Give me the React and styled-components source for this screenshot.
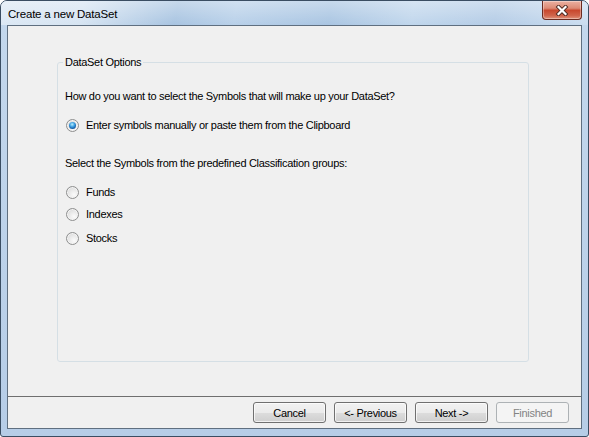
import React from 'react';
import styled, { createGlobalStyle } from 'styled-components';

const GlobalStyle = createGlobalStyle`
  html, body {
    margin: 0;
    padding: 0;
    background: #ffffff;
  }
  body {
    font-family: 'Liberation Sans', Arial, sans-serif;
    font-size: 11px;
    color: #000;
  }
`;

const Window = styled.div`
  box-sizing: border-box;
  width: 589px;
  height: 437px;
  display: flex;
  flex-direction: column;
  border: 1px solid #3a4d62;
  border-radius: 7px 7px 3px 3px;
  background: linear-gradient(180deg, #c4d8ed 0%, #b6cde7 100%);
  overflow: hidden;
`;

const TitleBar = styled.div`
  flex: none;
  height: 24px;
  display: flex;
  align-items: flex-start;
  justify-content: space-between;
  padding: 0 6px 0 7px;
  background:
    linear-gradient(180deg, rgba(255, 255, 255, 0.35) 0%, rgba(255, 255, 255, 0) 100%),
    linear-gradient(100deg, #dce8f4 0%, #d6e4f2 14%, #a8c4e1 30%, #b8d0e9 40%, #a9c5e2 56%, #c0d6ec 70%, #b4cce6 84%, #cbddf0 100%);
`;

const Title = styled.span`
  font-family: 'Liberation Sans', Arial, sans-serif;
  font-size: 11.5px;
  letter-spacing: -0.2px;
  line-height: 14px;
  margin-top: 6px;
  color: #000;
`;

const CloseButton = styled.div`
  box-sizing: border-box;
  width: 40px;
  height: 19px;
  display: flex;
  align-items: center;
  justify-content: center;
  border: 1px solid #6b2b20;
  border-top: none;
  border-radius: 0 0 4px 4px;
  background: linear-gradient(180deg, #ebb1a2 0%, #dc8a75 40%, #c8482e 52%, #d0634a 80%, #e0927a 100%);
  box-shadow: inset 0 0 0 1px rgba(255, 255, 255, 0.35);
`;

const Client = styled.div`
  flex: 1;
  display: flex;
  flex-direction: column;
  margin: 0 6px 7px;
  border: 1px solid #5f6f80;
  background: #f0f0f0;
  min-height: 0;
`;

const Body = styled.div`
  flex: 1;
  display: flex;
  padding: 30px 52px 34px 49px;
  min-height: 0;
`;

const GroupBox = styled.fieldset`
  flex: 1;
  margin: 0;
  padding: 0 7px;
  min-width: 0;
  border: 1px solid #d5dfe5;
  border-radius: 3px;
  display: flex;
  flex-direction: column;
`;

const Legend = styled.legend`
  padding: 0 2px;
  margin-left: -2px;
  font-size: 11px;
  letter-spacing: -0.3px;
  line-height: 13px;
`;

const Text = styled.div`
  font-size: 11px;
  letter-spacing: -0.3px;
  line-height: 13px;
  margin-top: ${(p) => p.$top}px;
`;

const OptionRow = styled.label`
  display: flex;
  align-items: center;
  gap: 7px;
  height: 13px;
  margin-top: ${(p) => p.$top}px;
  margin-left: 1px;
  font-size: 11px;
  letter-spacing: -0.3px;
  line-height: 13px;
`;

const Radio = styled.span`
  box-sizing: border-box;
  flex: none;
  width: 13px;
  height: 13px;
  border-radius: 50%;
  border: 1px solid #8e8f8f;
  background: radial-gradient(circle at 65% 70%, #fbfbfb 0%, #e6e6e6 55%, #c9c9c9 100%);
  box-shadow: inset 0 0 0 1px #f4f4f4;
  display: flex;
  align-items: center;
  justify-content: center;

  &::after {
    content: '';
    display: ${(p) => (p.$checked ? 'block' : 'none')};
    width: 7px;
    height: 7px;
    border-radius: 50%;
    background: radial-gradient(circle at 45% 35%, #b8f0ff 0%, #3c9ee0 40%, #155ea8 70%, #0a3a78 100%);
  }
`;

const Footer = styled.div`
  flex: none;
  display: flex;
  justify-content: flex-end;
  gap: 8px;
  padding: 5px 12px 5px 0;
  border-top: 1px solid #6f6f6f;
`;

const Button = styled.button`
  box-sizing: border-box;
  width: 73px;
  height: 21px;
  padding: 0;
  border: 1px solid ${(p) => (p.disabled ? '#adb2b5' : '#707070')};
  border-radius: 3px;
  font-family: 'Liberation Sans', Arial, sans-serif;
  font-size: 11px;
  letter-spacing: -0.3px;
  color: ${(p) => (p.disabled ? '#838383' : '#000')};
  background: ${(p) =>
    p.disabled
      ? '#f4f4f4'
      : 'linear-gradient(180deg, #f2f2f2 0%, #ebebeb 50%, #dddddd 50%, #cfcfcf 100%)'};
  box-shadow: inset 0 0 0 1px ${(p) => (p.disabled ? '#f4f4f4' : 'rgba(255,255,255,0.7)')};
`;

const CloseGlyph = () => (
  <svg width="14" height="11" viewBox="0 0 14 11">
    <path d="M3.5 2 L10.5 9 M10.5 2 L3.5 9" stroke="#4d2a22" strokeWidth="4" strokeLinecap="square" />
    <path d="M3.5 2 L10.5 9 M10.5 2 L3.5 9" stroke="#ffffff" strokeWidth="2.2" strokeLinecap="square" />
  </svg>
);

export default function App() {
  return (
    <>
      <GlobalStyle />
      <Window>
        <TitleBar>
          <Title>Create a new DataSet</Title>
          <CloseButton>
            <CloseGlyph />
          </CloseButton>
        </TitleBar>
        <Client>
          <Body>
            <GroupBox>
              <Legend>DataSet Options</Legend>
              <Text $top={21}>How do you want to select the Symbols that will make up your DataSet?</Text>
              <OptionRow $top={16}>
                <Radio $checked />
                Enter symbols manually or paste them from the Clipboard
              </OptionRow>
              <Text $top={25}>Select the Symbols from the predefined Classification groups:</Text>
              <OptionRow $top={16}>
                <Radio />
                Funds
              </OptionRow>
              <OptionRow $top={9}>
                <Radio />
                Indexes
              </OptionRow>
              <OptionRow $top={11}>
                <Radio />
                Stocks
              </OptionRow>
            </GroupBox>
          </Body>
          <Footer>
            <Button>Cancel</Button>
            <Button>&lt;- Previous</Button>
            <Button>Next -&gt;</Button>
            <Button disabled>Finished</Button>
          </Footer>
        </Client>
      </Window>
    </>
  );
}
